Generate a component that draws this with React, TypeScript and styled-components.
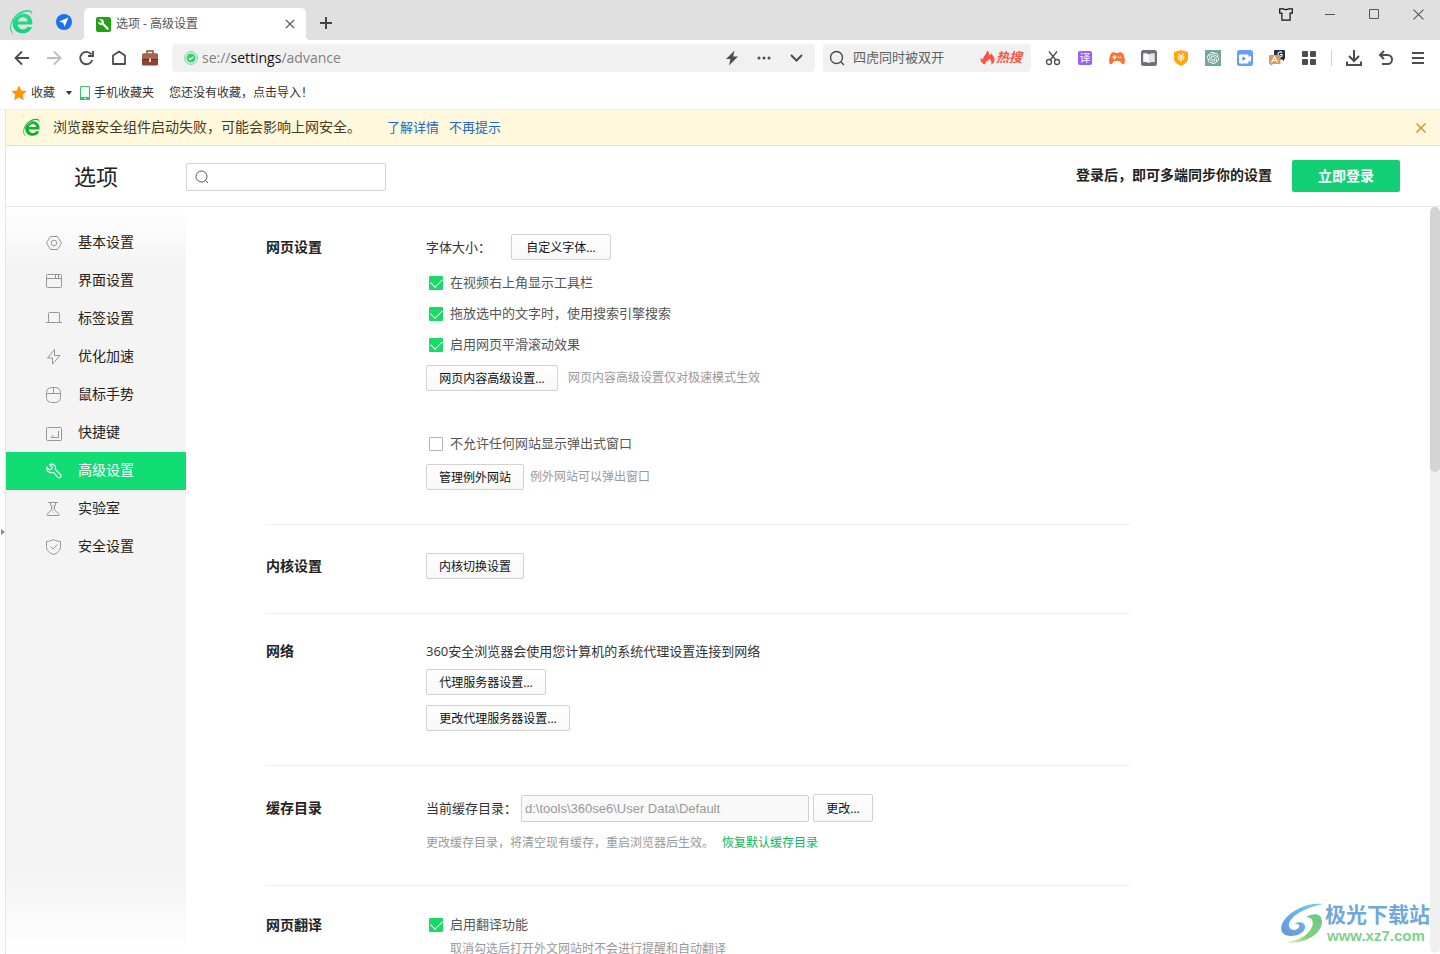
import React from "react";
import styled, { createGlobalStyle, css } from "styled-components";
import { SiOpenai } from "react-icons/si";

const GREEN = "#12dc74";

const GlobalStyle = createGlobalStyle`
  * { box-sizing: border-box; }
  body {
    margin: 0;
    background: #fff;
    color: #222;
    font-family: "Open Sans", "Noto Sans CJK SC", sans-serif;
    font-size: 13px;
  }
  button, input { font-family: inherit; }
  button { cursor: pointer; }
  svg { display: block; flex: none; }
  h1, h2, p, ul { margin: 0; padding: 0; }
`;

const Window = styled.div`
  display: flex;
  flex-direction: column;
  height: 100vh;
  overflow: hidden;
`;

/* ---------- Title bar ---------- */

const TitleBar = styled.header`
  display: flex;
  flex: none;
  height: 40px;
  background: #e0e0e0;
`;

const BrandArea = styled.div`
  display: flex;
  align-items: center;
  gap: 22px;
  width: 84px;
  padding: 4px 0 0 10px;
`;

const PlainButton = styled.button`
  display: flex;
  align-items: center;
  justify-content: center;
  padding: 0;
  border: 0;
  background: none;
  color: inherit;
`;

const Tab = styled.div`
  position: relative;
  display: flex;
  align-items: center;
  gap: 5px;
  width: 222px;
  height: 32px;
  margin-top: 8px;
  padding: 0 10px 0 12px;
  border-radius: 5px 5px 0 0;
  background: #fff;
  color: #555;
  font-size: 12px;

  &::before,
  &::after {
    content: "";
    position: absolute;
    bottom: 0;
    width: 4px;
    height: 4px;
  }
  &::before {
    left: -4px;
    background: radial-gradient(circle at 0 0, transparent 4px, #fff 4px);
  }
  &::after {
    right: -4px;
    background: radial-gradient(circle at 100% 0, transparent 4px, #fff 4px);
  }
`;

const TabTitle = styled.span`
  flex: 1;
  line-height: 20px;
`;

const NewTab = styled(PlainButton)`
  width: 40px;
  padding-top: 6px;
  color: #444;
`;

const WindowControls = styled.div`
  display: flex;
  margin-left: auto;
  color: #555;

  button {
    width: 44px;
    height: 28px;
  }
`;

/* ---------- Toolbar ---------- */

const Toolbar = styled.div`
  display: flex;
  flex: none;
  align-items: center;
  height: 36px;
  padding: 0 6px;
  color: #4d4d4d;
`;

const ToolButton = styled(PlainButton)`
  flex: none;
  width: 32px;
  height: 28px;
`;

const AddressBar = styled.div`
  display: flex;
  flex: 1;
  align-items: center;
  height: 28px;
  margin: 0 8px 0 6px;
  padding: 0 3px 0 12px;
  border-radius: 4px;
  background: #f1f1f1;
`;

const Address = styled.div`
  flex: 1;
  margin-left: 4px;
  outline: 0;
  color: #808080;
  font-size: 14px;
  line-height: 28px;

  b {
    color: #111;
    font-weight: 400;
  }
`;

const WebSearch = styled.label`
  display: flex;
  align-items: center;
  width: 208px;
  height: 28px;
  margin-right: 6px;
  padding: 0 9px 0 6px;
  border-radius: 4px;
  background: #f1f1f1;
`;

const WebSearchInput = styled.input`
  flex: 1;
  min-width: 0;
  margin-left: 8px;
  padding: 0 0 2px;
  border: 0;
  outline: 0;
  background: none;
  font-size: 13px;

  &::placeholder {
    color: #606060;
  }
`;

const HotTag = styled.span`
  display: flex;
  align-items: center;
  gap: 1px;
  color: #ff5040;
  font-size: 13px;
  font-style: italic;
  font-weight: 700;
  line-height: 18px;
  padding-bottom: 2px;
`;

const Divider = styled.span`
  width: 1px;
  height: 16px;
  margin: 0 6px;
  background: #d4d4d4;
`;

const TranslateBadge = styled.span`
  width: 14px;
  height: 14px;
  border-radius: 2px;
  background: #9461fb;
  color: #fff;
  font-size: 11px;
  line-height: 14px;
`;

/* ---------- Bookmarks ---------- */

const Bookmarks = styled.nav`
  display: flex;
  flex: none;
  align-items: center;
  height: 34px;
  padding: 0 11px;
  border-bottom: 1px solid #eeeeee;
  font-size: 12px;

  button {
    color: #333;
    font-size: 12px;
    line-height: 20px;
  }
`;

const BookmarkButton = styled(PlainButton)<{ $gap: number; $after: number }>`
  gap: ${(p) => p.$gap}px;
  margin-right: ${(p) => p.$after}px;
`;

/* ---------- Page frame ---------- */

const Frame = styled.div`
  display: flex;
  flex: 1;
  min-height: 0;
`;

const SideHandle = styled(PlainButton)`
  flex: none;
  width: 6px;
  border-right: 1px solid #e4e4e4;
`;

const Page = styled.div`
  display: flex;
  flex: 1;
  flex-direction: column;
  min-width: 0;
`;

const Notice = styled.div`
  display: flex;
  flex: none;
  align-items: center;
  height: 36px;
  padding: 0 14px 0 17px;
  border-bottom: 1px solid #f6dfa0;
  background: #fff8dc;
  color: #443c1e;
  font-size: 14px;
  line-height: 20px;

  p {
    flex: none;
    margin: 0 26px 0 12px;
    padding-bottom: 2px;
  }
  a {
    margin-right: 10px;
    padding-bottom: 2px;
    color: #2468c8;
    font-size: 13px;
    text-decoration: none;
  }
  button {
    margin-left: auto;
  }
`;

const PageHeader = styled.header`
  display: flex;
  flex: none;
  align-items: center;
  height: 61px;
  padding: 0 40px 0 68px;
  border-bottom: 1px solid #e6e6e6;
`;

const PageTitle = styled.h1`
  width: 112px;
  color: #222;
  font-size: 22px;
  font-weight: 400;
  line-height: 32px;
`;

const SettingsSearch = styled.label`
  display: flex;
  align-items: center;
  width: 200px;
  height: 28px;
  margin-top: 2px;
  padding: 0 8px;
  border: 1px solid #d4d4d4;
  border-radius: 2px;

  input {
    flex: 1;
    min-width: 0;
    border: 0;
    outline: 0;
    background: none;
  }
`;

const SyncText = styled.p`
  && {
    margin: 0 20px 0 auto;
    padding-bottom: 2px;
  }
  font-size: 14px;
  font-weight: 700;
  line-height: 20px;
`;

const LoginButton = styled.button`
  width: 108px;
  height: 32px;
  padding: 0 0 2px;
  border: 0;
  border-radius: 2px;
  background: #12cf73;
  color: #fff;
  font-size: 14px;
  font-weight: 700;
`;

const Body = styled.div`
  display: flex;
  flex: 1;
  min-height: 0;
`;

const Sidebar = styled.nav`
  flex: none;
  width: 180px;
  padding-top: 17px;
  background: linear-gradient(#fff 0, #f4f4f4 60px, #f4f4f4 calc(100% - 80px), #fff 100%);
`;

const NavLink = styled.a<{ $active?: boolean }>`
  display: flex;
  align-items: center;
  gap: 16px;
  height: 38px;
  padding-left: 40px;
  color: #222;
  font-size: 14px;
  text-decoration: none;

  svg {
    color: #969696;
  }
  ${(p) =>
    p.$active &&
    css`
      background: ${GREEN};
      color: #fff;
      svg {
        color: #fff;
      }
    `}
`;

const ItemText = styled.span`
  padding-bottom: 2px;
  line-height: 20px;
`;

const Main = styled.main`
  flex: 1;
  min-width: 0;
  overflow: hidden;
  padding: 0 80px;
`;

const Section = styled.section`
  display: flex;
  max-width: 864px;
  padding: 28px 0 34px;
  border-bottom: 1px solid #f0f0f0;

  &:first-child {
    padding-top: 27px;
  }
`;

const SectionTitle = styled.h2<{ $line: number }>`
  flex: none;
  width: 160px;
  font-size: 14px;
  font-weight: 700;
  line-height: ${(p) => p.$line}px;
`;

const SectionBody = styled.div`
  flex: 1;
  min-width: 0;
`;

const Row = styled.div<{ $top?: number; $gap?: number }>`
  display: flex;
  align-items: center;
  gap: ${(p) => p.$gap ?? 10}px;
  margin-top: ${(p) => p.$top ?? 0}px;
`;

const Label = styled.span`
  color: #333;
  font-size: 13px;
  line-height: 18px;
`;

const Hint = styled.span<{ $indent?: boolean }>`
  padding-left: ${(p) => (p.$indent ? 24 : 0)}px;
  color: #999;
  font-size: 12px;
  line-height: 16px;
`;

const GreenLink = styled.a`
  color: #0bb75b;
  font-size: 12px;
  line-height: 16px;
  text-decoration: none;
`;

const Button = styled.button<{ $width: number; $tall?: boolean }>`
  min-width: ${(p) => p.$width}px;
  height: ${(p) => (p.$tall ? 28 : 26)}px;
  padding: 0 8px;
  border: 1px solid #d2d2d2;
  border-radius: 2px;
  background: linear-gradient(#fff, #f8f8f8);
  color: #111;
  font-size: 12px;
  white-space: nowrap;
`;

const CheckLabel = styled.label<{ $top?: number }>`
  display: flex;
  align-items: center;
  gap: 7px;
  height: 22px;
  margin-top: ${(p) => p.$top ?? 0}px;
  padding-left: 3px;
  color: #555;
  font-size: 13px;
`;

const CheckBox = styled.input`
  appearance: none;
  flex: none;
  width: 14px;
  height: 14px;
  margin: 0;
  border: 1px solid #b4b4b4;
  border-radius: 1px;
  background: #fff;

  &:checked {
    display: grid;
    place-items: center;
    border: 0;
    background: #1bd867;
  }
  &:checked::before {
    content: "";
    width: 10px;
    height: 6px;
    border: solid #fff;
    border-width: 0 0 1px 1px;
    transform: translateY(-2px) rotate(-45deg);
  }
`;

const PathInput = styled.input`
  width: 288px;
  height: 27px;
  padding: 0 3px;
  border: 1px solid #cfcfcf;
  border-radius: 2px;
  background: #f9f9f9;
  color: #999;
  font-family: "Liberation Sans", sans-serif;
  font-size: 13px;
`;

const ScrollTrack = styled.div`
  flex: none;
  width: 10px;
  margin-bottom: 1px;
  border-radius: 5px;
  background: #f0f0f0;
`;

const ScrollThumb = styled.div`
  height: 265px;
  border-radius: 5px;
  background: #d4d4d4;
`;

const Watermark = styled.div`
  position: absolute;
  right: 10px;
  bottom: 8px;
  display: flex;
  align-items: center;
  pointer-events: none;
`;

const WatermarkText = styled.div`
  display: flex;
  flex-direction: column;
  color: #6fa8dc;
  font-size: 21px;
  font-weight: 700;
  line-height: 24px;

  span {
    color: #7dd18e;
    font-family: "Liberation Sans", sans-serif;
    font-size: 15px;
    line-height: 20px;
    padding-left: 2px;
  }
`;

/* ---------- Icons ---------- */

const Icon = ({
  size = 16,
  width = 1,
  children,
}: {
  size?: number;
  width?: number;
  children: React.ReactNode;
}) => (
  <svg width={size} height={size} viewBox="0 0 16 16" fill="none" stroke="currentColor" strokeWidth={width} aria-hidden="true">
    {children}
  </svg>
);

const BrowserLogo = ({ width, height, from, to }: { width: number; height: number; from: string; to: string }) => {
  const id = `logo-${width}`;
  return (
    <svg width={width} height={height} viewBox="0 0 24 26" aria-hidden="true">
      <defs>
        <linearGradient id={id} x1="0" y1="0" x2="0" y2="1">
          <stop offset="0" stopColor={from} />
          <stop offset="1" stopColor={to} />
        </linearGradient>
      </defs>
      <g fill={`url(#${id})`}>
        <path d="M22.300 13c.1.900.1 1.700 0 2.600H7.600c.4 3 2.400 4.800 5.200 4.800 2.200 0 3.700-.8 4.700-2.400h4.400c-1.500 4-4.800 6.300-9.200 6.300C6.900 24.300 2.700 20 2.700 14.200c0-1 .1-1.900.4-2.700C5.300 9 8.300 6.600 11.500 4.600c6-.5 10.500 3 10.800 8.400ZM7.900 12.400h9.900c-.7-2.600-2.500-4.100-5-4.100-2.400 0-4.200 1.500-4.900 4.100Z" />
        <path d="M1.200 13C3.800 6.200 9.800 1.400 17 .9c3-.2 5.300 1 5.200 3.200 0 .5-.1 1-.4 1.500-.1-1.700-1.300-2.600-3.300-2.800C12.500 2.300 6 6.600 2.500 12.500c-2.200 4.700-2 9.500 1.300 12.900C.2 23.700-1 18.500 1.200 13Z" />
      </g>
    </svg>
  );
};

const CloseIcon = ({ size = 10, width = 1.2 }: { size?: number; width?: number }) => (
  <svg width={size} height={size} viewBox="0 0 10 10" stroke="currentColor" strokeWidth={width} aria-hidden="true">
    <path d="M.5.5l9 9M9.500.5l-9 9" />
  </svg>
);

const navItems: { label: string; icon: React.ReactNode; active?: boolean }[] = [
  {
    label: "基本设置",
    icon: (
      <Icon>
        <path d="M4.500 1.500h7L15.500 8l-4 6.500h-7L.5 8z" strokeLinejoin="round" />
        <circle cx="8" cy="8" r="2.800" />
      </Icon>
    ),
  },
  {
    label: "界面设置",
    icon: (
      <Icon>
        <rect x=".5" y="1.500" width="15" height="13" rx="1" />
        <path d="M.5 5.500h15M9.500 1.500v4M12.500 1.500v4" />
      </Icon>
    ),
  },
  {
    label: "标签设置",
    icon: (
      <Icon>
        <path d="M2.500 11.500v-9q0-1 1-1h9q1 0 1 1v9M0 11.500h16" />
      </Icon>
    ),
  },
  {
    label: "优化加速",
    icon: (
      <Icon>
        <path d="M8.500 .5L1.500 9h5L6.500 15l7.500-8.500H8.500z" strokeLinejoin="round" />
      </Icon>
    ),
  },
  {
    label: "鼠标手势",
    icon: (
      <Icon>
        <rect x=".5" y=".5" width="14" height="15" rx="5" />
        <path d="M.5 6.500h14M7.500.5v6" />
      </Icon>
    ),
  },
  {
    label: "快捷键",
    icon: (
      <Icon>
        <rect x=".5" y="2.500" width="15" height="13" rx="1" />
        <path d="M12.500 6v6.500H5L7.500 10" />
      </Icon>
    ),
  },
  {
    label: "高级设置",
    active: true,
    icon: (
      <Icon width={1.2}>
        <path
          d="M3.600 1.500c2-.8 4.500-.1 5.500 1.700.6 1.100.5 2.200.2 3.200l5 5c1.700 1.800-.7 4.400-2.600 2.700L7.500 9.300c-3 .9-6.300-.2-6.800-3.700L.8 4.200l2.600 2.500 2.200-.5.600-2.100z"
          strokeLinejoin="round"
        />
      </Icon>
    ),
  },
  {
    label: "实验室",
    icon: (
      <Icon>
        <path d="M2 1.500h10M4.500 1.500V4l1 1v3.500l-4.500 5q-.4 1 .5 1h11q.9 0 .5-1L8.500 8.500V5l1-1V1.500" />
        <path d="M7 4v8" strokeDasharray="1 1.500" />
      </Icon>
    ),
  },
  {
    label: "安全设置",
    icon: (
      <Icon>
        <path d="M7.500.5c2 1.300 4.500 1.900 7 1.900v5c0 4-2.500 6.600-7 8.100C3 14 .5 11.400.5 7.400v-5c2.500 0 5-.6 7-1.900z" strokeLinejoin="round" />
        <path d="M4.500 7.500l2.500 2.500 4.500-4.500" />
      </Icon>
    ),
  },
];

const Check = ({ label, checked = false, top }: { label: string; checked?: boolean; top?: number }) => (
  <CheckLabel $top={top}>
    <CheckBox type="checkbox" defaultChecked={checked} />
    <ItemText>{label}</ItemText>
  </CheckLabel>
);

const extensions: { name: string; icon: React.ReactNode }[] = [
  {
    name: "截图",
    icon: (
      <Icon width={1.3}>
        <circle cx="4" cy="12" r="2.500" />
        <circle cx="12" cy="12" r="2.500" />
        <path d="M4 1.500l6.800 8.500M12 1.500L5.200 10" />
      </Icon>
    ),
  },
  { name: "翻译", icon: <TranslateBadge>译</TranslateBadge> },
  {
    name: "游戏",
    icon: (
      <svg width="16" height="16" viewBox="0 0 16 16" aria-hidden="true">
        <path d="M5.300 2C2.200 2 .8 5 .2 9.400c-.4 3 .2 4.900 1.800 4.900 1.800 0 1.800-2.900 4-3.300h4c2.200.4 2.200 3.300 4 3.300 1.600 0 2.200-1.900 1.800-4.900C15.200 5 13.800 2 10.700 2L9.500 3h-3z" fill="#fb7433" />
        <path d="M4 7.300h3M5.500 5.800v3M9.700 7.300h.1M11.800 7.300h.1" stroke="#fff" strokeWidth="1.400" strokeLinecap="round" />
      </svg>
    ),
  },
  {
    name: "阅读",
    icon: (
      <svg width="16" height="16" viewBox="0 0 16 16" aria-hidden="true">
        <rect width="16" height="16" rx="2.500" fill="#6f7077" />
        <path d="M2.200 3.500C4.500 3 6.500 3.300 8 4.500V13c-1.600-1-3.500-1.200-5.800-.8z" fill="#fff" />
        <path d="M13.800 3.500C11.500 3 9.500 3.300 8 4.500V13c1.600-1 3.500-1.200 5.800-.8z" fill="#e4e4e6" />
      </svg>
    ),
  },
  {
    name: "比价",
    icon: (
      <svg width="16" height="16" viewBox="0 0 16 16" aria-hidden="true">
        <path d="M8 0l7 2v6.500c0 3.500-3 5.500-7 7.500-4-2-7-4-7-7.500V2z" fill="#ffa70f" />
        <path d="M5.500 4L8 6.500 10.500 4M4.500 7h7M5 9h6M8 6.500V12" stroke="#fff" strokeWidth="1.100" fill="none" />
      </svg>
    ),
  },
  {
    name: "智能助手",
    icon: (
      <svg width="16" height="16" viewBox="0 0 16 16" aria-hidden="true">
        <rect width="16" height="16" fill="#73a797" />
        <SiOpenai x={2} y={2} size={12} color="#fff" />
      </svg>
    ),
  },
  {
    name: "视频",
    icon: (
      <svg width="16" height="16" viewBox="0 0 16 16" aria-hidden="true">
        <rect width="16" height="16" rx="2.500" fill="#6a9dfb" />
        <path d="M3 4.500h7.500q1 0 1 1v1.200l2.500-1v6l-2.500-1v1.800q0 1-1 1H3q-1 0-1-1v-7q0-1 1-1z" fill="#fff" />
        <path d="M5.500 6.500v4.200L9 8.600z" fill="#4b84f0" />
      </svg>
    ),
  },
  {
    name: "网页翻译",
    icon: (
      <svg width="16" height="16" viewBox="0 0 16 16" fill="none" aria-hidden="true">
        <path d="M6 0h9q1 0 1 1v7.500q0 1-1 1V11l-2-1.500H5V1q0-1 1-1z" fill="#233349" />
        <path d="M13 2.700c-1.200-1.400-4-1-4 1.500s3 3 4 1.800V4.500h-2" stroke="#fff" strokeWidth="1.100" />
        <path d="M1 5h9.500q1 0 1 1v7q0 1-1 1H4l-2.500 2v-2H1q-1 0-1-1V6q0-1 1-1z" fill="#d99a5b" />
        <path d="M2.500 12.500l3-6 3 6M4 10.500h3.200" stroke="#fff" strokeWidth="1.200" />
      </svg>
    ),
  },
  {
    name: "扩展",
    icon: (
      <svg width="14" height="14" viewBox="0 0 14 14" fill="#4d4d4d" aria-hidden="true">
        <rect width="6" height="6" rx="1" />
        <rect x="8" width="6" height="6" rx="1" />
        <rect y="8" width="6" height="6" rx="1" />
        <rect x="8" y="8" width="6" height="6" rx="1" />
      </svg>
    ),
  },
];

export default function App() {
  return (
    <Window>
      <GlobalStyle />

      <TitleBar>
        <BrandArea>
          <BrowserLogo width={24} height={26} from="#22dd92" to="#12d27c" />
          <PlainButton aria-label="导航">
            <svg width="16" height="16" viewBox="0 0 16 16" aria-hidden="true">
              <circle cx="8" cy="8" r="8" fill="#1b72ee" />
              <path d="M12.500 3.500L3.200 7.500l4 1.300 1.300 4z" fill="#fff" />
            </svg>
          </PlainButton>
        </BrandArea>
        <Tab>
          <svg width="15" height="15" viewBox="0 0 15 15" aria-hidden="true">
            <rect width="15" height="15" rx="2" fill="#21a210" />
            <path d="M3 2.300c2-.8 4.800.2 4.900 2.500l-.1 1.400 4.700 4.500c1 1.400-.6 2.700-1.800 1.700L6.200 7.800C4 8.300 1.900 7 2 4.400l2 1.500 1.300-.4.200-1.300z" fill="#fff" />
          </svg>
          <TabTitle>选项 - 高级设置</TabTitle>
          <PlainButton aria-label="关闭标签页">
            <Icon size={12} width={1.8}>
              <path d="M2.500 2.500l11 11M13.500 2.500l-11 11" />
            </Icon>
          </PlainButton>
        </Tab>
        <NewTab aria-label="新建标签页">
          <svg width="12" height="12" viewBox="0 0 12 12" stroke="currentColor" strokeWidth="2" aria-hidden="true">
            <path d="M6 0v12M0 6h12" />
          </svg>
        </NewTab>
        <WindowControls>
          <PlainButton aria-label="皮肤">
            <svg width="14" height="13" viewBox="0 0 14 13" fill="none" stroke="#111" strokeWidth="1.200" aria-hidden="true">
              <path d="M.7.8h3.500Q7 2.600 9.800.8h3.500v4.400h-2.200v7H2.900v-7H.7z" />
            </svg>
          </PlainButton>
          <PlainButton aria-label="最小化">
            <svg width="10" height="10" viewBox="0 0 10 10" stroke="currentColor" aria-hidden="true">
              <path d="M0 5.500h10" />
            </svg>
          </PlainButton>
          <PlainButton aria-label="最大化">
            <svg width="10" height="10" viewBox="0 0 10 10" fill="none" stroke="currentColor" aria-hidden="true">
              <path d="M.5.500h9v9h-9z" />
            </svg>
          </PlainButton>
          <PlainButton aria-label="关闭">
            <CloseIcon size={11} width={1} />
          </PlainButton>
        </WindowControls>
      </TitleBar>

      <Toolbar>
        <ToolButton aria-label="后退">
          <Icon width={1.8}>
            <path d="M15 8H2M8 1.500L1.500 8 8 14.500" />
          </Icon>
        </ToolButton>
        <ToolButton aria-label="前进" disabled>
          <svg width="16" height="16" viewBox="0 0 16 16" fill="none" stroke="#bdbdbd" strokeWidth="1.800" aria-hidden="true">
            <path d="M1 8h13M8 1.500L14.500 8 8 14.500" />
          </svg>
        </ToolButton>
        <ToolButton aria-label="刷新">
          <Icon width={1.9}>
            <path d="M14.300 10A6.200 6.200 0 1 1 13.500 4.500" />
            <path d="M15 1v5h-5" />
          </Icon>
        </ToolButton>
        <ToolButton aria-label="主页">
          <Icon width={1.8}>
            <path d="M3 14V5.500L9 1.500l6 4V14z" strokeLinejoin="round" />
          </Icon>
        </ToolButton>
        <ToolButton aria-label="工具箱">
          <svg width="16" height="16" viewBox="0 0 16 16" fill="none" aria-hidden="true">
            <path d="M5 4V1h6v3" stroke="#8d4a36" strokeWidth="1.400" />
            <rect y="3.500" width="16" height="12" rx="1.500" fill="#8b4533" />
            <path d="M0 5q0-1.500 1.500-1.500h13Q16 3.500 16 5v4.500H0z" fill="#a86450" />
            <path d="M0 9.500h16" stroke="#5f2a1e" />
            <rect x="7" y="8.500" width="2" height="3.500" fill="#ffe08a" />
          </svg>
        </ToolButton>

        <AddressBar>
          <svg width="14" height="14" viewBox="0 0 14 14" fill="none" aria-hidden="true">
            <circle cx="7" cy="7" r="6.300" stroke="#5fda8c" />
            <circle cx="7" cy="7" r="4.500" fill="#35cf70" />
            <path d="M4.800 7l1.700 1.700 2.900-3" stroke="#fff" strokeWidth="1.200" />
          </svg>
          <Address role="textbox" aria-label="地址栏" contentEditable suppressContentEditableWarning spellCheck={false}>
            se://<b>settings</b>/advance
          </Address>
          <ToolButton aria-label="极速模式">
            <svg width="12" height="16" viewBox="0 0 12 16" fill="currentColor" aria-hidden="true">
              <path d="M8.500.5L0 9h4.500L3 15.500 12 6.500H7.200z" />
            </svg>
          </ToolButton>
          <ToolButton aria-label="更多">
            <svg width="14" height="4" viewBox="0 0 14 4" fill="currentColor" aria-hidden="true">
              <circle cx="2" cy="2" r="1.500" />
              <circle cx="7" cy="2" r="1.500" />
              <circle cx="12" cy="2" r="1.500" />
            </svg>
          </ToolButton>
          <ToolButton aria-label="展开">
            <svg width="13" height="8" viewBox="0 0 13 8" fill="none" stroke="currentColor" strokeWidth="2" aria-hidden="true">
              <path d="M1 1l5.500 5.500L12 1" />
            </svg>
          </ToolButton>
        </AddressBar>

        <WebSearch>
          <Icon width={1.4}>
            <circle cx="7.500" cy="7.500" r="6" />
            <path d="M12 12l3 3" />
          </Icon>
          <WebSearchInput aria-label="搜索" placeholder="四虎同时被双开" />
          <HotTag>
            <svg width="15" height="15" viewBox="0 0 15 15" fill="currentColor" aria-hidden="true">
              <path d="M7 .5c2 1.500 2.500 3.300 2.200 5.200l2-2.200c2.300 2.700 4.300 5.500 2.800 8.500-.6 1.300-1.700 2.100-3 2.500 1-2.300.2-4.300-1.500-6C9 10 8 10.500 6.500 11.500 5.300 12.500 5 13.500 5.300 14.500 1.800 13.700-.2 10.800.9 8L3 9.500C3.200 5.500 6.800 4.500 7 .5z" />
            </svg>
            热搜
          </HotTag>
        </WebSearch>

        {extensions.map((ext) => (
          <ToolButton key={ext.name} aria-label={ext.name}>
            {ext.icon}
          </ToolButton>
        ))}
        <Divider />
        <ToolButton aria-label="下载">
          <Icon width={2}>
            <path d="M8 0v10.500M3 6l5 5 5-5M1 11.500V15h14v-3.500" />
          </Icon>
        </ToolButton>
        <ToolButton aria-label="恢复">
          <Icon width={2}>
            <path d="M2 5h7.500a4.500 4.500 0 0 1 0 9H4M6 1L2 5l4 4" />
          </Icon>
        </ToolButton>
        <ToolButton aria-label="菜单">
          <svg width="12" height="12" viewBox="0 0 12 12" stroke="currentColor" strokeWidth="2" aria-hidden="true">
            <path d="M0 1h12M0 6h12M0 11h12" />
          </svg>
        </ToolButton>
      </Toolbar>

      <Bookmarks>
        <BookmarkButton $gap={4} $after={11}>
          <svg width="16" height="16" viewBox="0 0 16 16" fill="#ff9500" aria-hidden="true">
            <path d="M8 .5l2.300 5 5.500.6-4.100 3.700 1.200 5.500L8 12.600l-4.900 2.700 1.200-5.500L.2 6.100l5.500-.6z" />
          </svg>
          收藏
        </BookmarkButton>
        <BookmarkButton $gap={0} $after={8} aria-label="收藏菜单">
          <svg width="6" height="4" viewBox="0 0 6 4" fill="#333" aria-hidden="true">
            <path d="M0 0h6L3 4z" />
          </svg>
        </BookmarkButton>
        <BookmarkButton $gap={4} $after={15}>
          <svg width="10" height="14" viewBox="0 0 10 14" aria-hidden="true">
            <rect x=".5" y=".5" width="9" height="13" rx=".5" fill="#f0fff8" stroke="#3fbf71" />
            <path d="M0 11h10v3H0z" fill="#3fbf71" />
            <path d="M4 12.500h2" stroke="#fff" />
          </svg>
          手机收藏夹
        </BookmarkButton>
        <BookmarkButton $gap={0} $after={0}>您还没有收藏，点击导入！</BookmarkButton>
      </Bookmarks>

      <Frame>
        <SideHandle aria-label="展开侧栏">
          <svg width="4" height="6" viewBox="0 0 4 6" fill="#888" aria-hidden="true">
            <path d="M0 0l4 3-4 3z" />
          </svg>
        </SideHandle>
        <Page>
          <Notice>
            <BrowserLogo width={18} height={19} from="#12b83a" to="#08b02c" />
            <p>浏览器安全组件启动失败，可能会影响上网安全。</p>
            <a href="#detail">了解详情</a>
            <a href="#dismiss">不再提示</a>
            <PlainButton aria-label="关闭提示">
              <svg width="10" height="10" viewBox="0 0 10 10" stroke="#c3940f" strokeWidth="1.300" aria-hidden="true">
                <path d="M.5.5l9 9M9.500.5l-9 9" />
              </svg>
            </PlainButton>
          </Notice>

          <PageHeader>
            <PageTitle>选项</PageTitle>
            <SettingsSearch>
              <svg width="14" height="14" viewBox="0 0 14 14" fill="none" stroke="#555" aria-hidden="true">
                <circle cx="6.500" cy="6.500" r="5.500" />
                <path d="M10.500 10.500L13 13" />
              </svg>
              <input aria-label="搜索设置" />
            </SettingsSearch>
            <SyncText>登录后，即可多端同步你的设置</SyncText>
            <LoginButton>立即登录</LoginButton>
          </PageHeader>

          <Body>
            <Sidebar>
              {navItems.map((item) => (
                <NavLink key={item.label} href={`#${item.label}`} $active={item.active}>
                  {item.icon}
                  <ItemText>{item.label}</ItemText>
                </NavLink>
              ))}
            </Sidebar>

            <Main>
              <Section>
                <SectionTitle $line={26}>网页设置</SectionTitle>
                <SectionBody>
                  <Row $gap={20}>
                    <Label>字体大小：</Label>
                    <Button $width={100}>自定义字体...</Button>
                  </Row>
                  <Check label="在视频右上角显示工具栏" checked top={12} />
                  <Check label="拖放选中的文字时，使用搜索引擎搜索" checked top={9} />
                  <Check label="启用网页平滑滚动效果" checked top={9} />
                  <Row $top={9}>
                    <Button $width={132}>网页内容高级设置...</Button>
                    <Hint>网页内容高级设置仅对极速模式生效</Hint>
                  </Row>
                  <Check label="不允许任何网站显示弹出式窗口" top={42} />
                  <Row $top={9} $gap={6}>
                    <Button $width={98}>管理例外网站</Button>
                    <Hint>例外网站可以弹出窗口</Hint>
                  </Row>
                </SectionBody>
              </Section>

              <Section>
                <SectionTitle $line={26}>内核设置</SectionTitle>
                <SectionBody>
                  <Row>
                    <Button $width={98}>内核切换设置</Button>
                  </Row>
                </SectionBody>
              </Section>

              <Section>
                <SectionTitle $line={18}>网络</SectionTitle>
                <SectionBody>
                  <Row>
                    <Label>360安全浏览器会使用您计算机的系统代理设置连接到网络</Label>
                  </Row>
                  <Row $top={9}>
                    <Button $width={120}>代理服务器设置...</Button>
                  </Row>
                  <Row $top={10}>
                    <Button $width={144}>更改代理服务器设置...</Button>
                  </Row>
                </SectionBody>
              </Section>

              <Section>
                <SectionTitle $line={28}>缓存目录</SectionTitle>
                <SectionBody>
                  <Row $gap={4}>
                    <Label as="label" htmlFor="cache-path">当前缓存目录：</Label>
                    <PathInput id="cache-path" disabled defaultValue="d:\tools\360se6\User Data\Default" />
                    <Button $width={60} $tall>更改...</Button>
                  </Row>
                  <Row $top={13} $gap={8}>
                    <Hint>更改缓存目录，将清空现有缓存，重启浏览器后生效。</Hint>
                    <GreenLink href="#reset">恢复默认缓存目录</GreenLink>
                  </Row>
                </SectionBody>
              </Section>

              <Section>
                <SectionTitle $line={22}>网页翻译</SectionTitle>
                <SectionBody>
                  <Check label="启用翻译功能" checked />
                  <Row $top={5}>
                    <Hint $indent>取消勾选后打开外文网站时不会进行提醒和自动翻译</Hint>
                  </Row>
                </SectionBody>
              </Section>
            </Main>

            <ScrollTrack>
              <ScrollThumb />
            </ScrollTrack>
          </Body>
        </Page>
      </Frame>

      <Watermark>
        <svg width="44" height="42" viewBox="0 0 44 42" aria-hidden="true">
          <defs>
            <linearGradient id="swirl-blue" x1="1" y1="0" x2="0" y2="1">
              <stop offset="0" stopColor="#69d0ee" />
              <stop offset=".5" stopColor="#66b4ea" />
              <stop offset="1" stopColor="#6b93d3" />
            </linearGradient>
            <linearGradient id="swirl-green" x1="1" y1="0" x2="0" y2="1">
              <stop offset="0" stopColor="#69c98c" />
              <stop offset=".6" stopColor="#86d07e" />
              <stop offset="1" stopColor="#f3ee8d" />
            </linearGradient>
          </defs>
          <path d="M42 1C27-1 11 7 4 16c-7 9-4 17 6 17 8 0 15-5 14-10-1-4-6-5-11-2 4-1 6 0 5 3-2 4-9 4-10-1C7 15 22 5 42 1z" fill="url(#swirl-blue)" />
          <path d="M25 14c9-5 16-3 16 5 0 11-16 23-37 20 10 0 21-5 26-13 4-7 1-12-5-12z" fill="url(#swirl-green)" />
        </svg>
        <WatermarkText>
          极光下载站
          <span>www.xz7.com</span>
        </WatermarkText>
      </Watermark>
    </Window>
  );
}
